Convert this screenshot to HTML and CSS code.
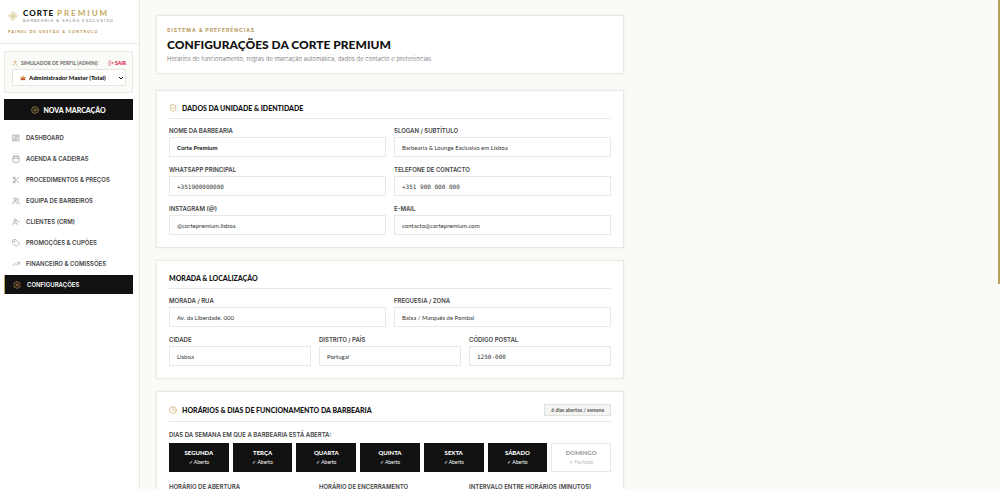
FILE: index.html
```html
<!DOCTYPE html>
<html lang="pt">
  <head>
    <meta charset="UTF-8" />
    <meta name="viewport" content="width=device-width, initial-scale=1.0" />
    <title>Configurações | Corte Premium</title>
    <link rel="stylesheet" href="styles.css">
  </head>
  <body>
    <aside class="sidebar">
      <header class="brand">
        <div class="brand-row">
          <svg class="brand-logo" viewBox="0 0 24 24">
            <path class="soft" d="M12 0l12 12-12 12L0 12z" />
            <path d="M12 4l8 8-8 8-8-8z" />
            <path class="solid" d="M12 9l3 3-3 3-3-3z" />
          </svg>
          <div>
            <div class="brand-name">CORTE <span>PREMIUM</span></div>
            <div class="brand-tagline">BARBEARIA &amp; SALÃO EXCLUSIVO</div>
          </div>
        </div>
        <div class="brand-panel">PAINEL DE GESTÃO &amp; CONTROLO</div>
      </header>

      <div class="profile">
        <div class="profile-top">
          <svg class="icon gold" viewBox="0 0 24 24"><circle cx="12" cy="7" r="4" /><path d="M5 22v-3a4 4 0 0 1 4-4h6a4 4 0 0 1 4 4v3" /></svg>
          <label for="profile">SIMULADOR DE PERFIL (ADMIN):</label>
          <button type="button" class="btn-sair">
            <svg class="icon" viewBox="0 0 24 24"><path d="M9 21H4V3h5M16 17l5-5-5-5M21 12H9" /></svg>
            SAIR
          </button>
        </div>
        <div class="select-wrap">
          <svg class="crown" viewBox="0 0 24 24"><path d="M1 6l6 4 5-8 5 8 6-4-2 15H3z" /><path class="band" d="M4 15h16v5H4z" /></svg>
          <select id="profile">
            <option>Administrador Master (Total)</option>
          </select>
          <svg class="arrow" viewBox="0 0 12 12"><path d="M2 4l4 4 4-4" /></svg>
        </div>
      </div>

      <button type="button" class="btn-nova">
        <svg class="icon" viewBox="0 0 24 24"><circle cx="12" cy="12" r="10" /><path d="M8 12h8M12 8v8" /></svg>
        NOVA MARCAÇÃO
      </button>

      <nav class="menu">
        <a href="#dashboard">
          <svg class="icon" viewBox="0 0 24 24"><rect x="3" y="3" width="7" height="9" /><rect x="14" y="3" width="7" height="5" /><rect x="14" y="12" width="7" height="9" /><rect x="3" y="16" width="7" height="5" /></svg>
          DASHBOARD
        </a>
        <a href="#agenda">
          <svg class="icon" viewBox="0 0 24 24"><rect x="3" y="4" width="18" height="18" rx="2" /><path d="M8 2v4M16 2v4M3 10h18" /></svg>
          AGENDA &amp; CADEIRAS
        </a>
        <a href="#procedimentos">
          <svg class="icon" viewBox="0 0 24 24"><circle cx="6" cy="6" r="3" /><circle cx="6" cy="18" r="3" /><path d="M20 4L8.100 15.900M14.500 14.500L20 20M8.100 8.100L12 12" /></svg>
          PROCEDIMENTOS &amp; PREÇOS
        </a>
        <a href="#equipa">
          <svg class="icon" viewBox="0 0 24 24"><circle cx="9" cy="7" r="4" /><path d="M2 21v-2a4 4 0 0 1 4-4h6a4 4 0 0 1 4 4v2M16 3a4 4 0 0 1 0 8M22 21v-2a4 4 0 0 0-3-4" /></svg>
          EQUIPA DE BARBEIROS
        </a>
        <a href="#clientes">
          <svg class="icon" viewBox="0 0 24 24"><circle cx="9" cy="7" r="4" /><path d="M2 21v-2a4 4 0 0 1 4-4h6a4 4 0 0 1 4 4v2M16 11l2 2 5-5" /></svg>
          CLIENTES (CRM)
        </a>
        <a href="#promocoes">
          <svg class="icon" viewBox="0 0 24 24"><path d="M2 3a1 1 0 0 1 1-1h9l9.500 9.500a2 2 0 0 1 0 3l-7 7a2 2 0 0 1-3 0L2 12z" /><circle cx="7.500" cy="7.500" r="1" /></svg>
          PROMOÇÕES &amp; CUPÕES
        </a>
        <a href="#financeiro">
          <svg class="icon" viewBox="0 0 24 24"><path d="M22 7l-8.500 8.500-5-5L2 17M16 7h6v6" /></svg>
          FINANCEIRO &amp; COMISSÕES
        </a>
        <a href="#configuracoes" class="active">
          <svg class="icon" viewBox="0 0 24 24"><path d="M10 2h4l1 3 2 1 3-1 2 4-2 2v2l2 2-2 4-3-1-2 1-1 3h-4l-1-3-2-1-3 1-2-4 2-2v-2L2 9l2-4 3 1 2-1z" /><circle cx="12" cy="12" r="3" /></svg>
          CONFIGURAÇÕES
        </a>
      </nav>
    </aside>

    <main class="content">
      <section class="card page-head">
        <div class="eyebrow">SISTEMA &amp; PREFERÊNCIAS</div>
        <h1>CONFIGURAÇÕES DA CORTE PREMIUM</h1>
        <p>Horários de funcionamento, regras de marcação automática, dados de contacto e preferências</p>
      </section>

      <form class="settings">
        <section class="card">
          <div class="card-title">
            <svg class="icon gold" viewBox="0 0 24 24"><path d="M12 2l8 3v7c0 5-3 8-8 10-5-2-8-5-8-10V5z" /><path d="M9 12l2 2 4-4" /></svg>
            <h2>DADOS DA UNIDADE &amp; IDENTIDADE</h2>
          </div>
          <div class="grid cols-2">
            <div class="form-group">
              <label for="nome">NOME DA BARBEARIA</label>
              <input type="text" id="nome" class="strong" value="Corte Premium" />
            </div>
            <div class="form-group">
              <label for="slogan">SLOGAN / SUBTÍTULO</label>
              <input type="text" id="slogan" value="Barbearia &amp; Lounge Exclusivo em Lisboa" />
            </div>
            <div class="form-group">
              <label for="whatsapp">WHATSAPP PRINCIPAL</label>
              <input type="text" id="whatsapp" class="mono" value="+351900000000" />
            </div>
            <div class="form-group">
              <label for="telefone">TELEFONE DE CONTACTO</label>
              <input type="text" id="telefone" class="mono" value="+351 900 000 000" />
            </div>
            <div class="form-group">
              <label for="instagram">INSTAGRAM (@)</label>
              <input type="text" id="instagram" value="@cortepremium.lisboa" />
            </div>
            <div class="form-group">
              <label for="email">E-MAIL</label>
              <input type="email" id="email" value="contacto@cortepremium.com" />
            </div>
          </div>
        </section>

        <section class="card">
          <div class="card-title">
            <h2>MORADA &amp; LOCALIZAÇÃO</h2>
          </div>
          <div class="grid cols-2">
            <div class="form-group">
              <label for="rua">MORADA / RUA</label>
              <input type="text" id="rua" value="Av. da Liberdade, 000" />
            </div>
            <div class="form-group">
              <label for="zona">FREGUESIA / ZONA</label>
              <input type="text" id="zona" value="Baixa / Marquês de Pombal" />
            </div>
          </div>
          <div class="grid cols-3">
            <div class="form-group">
              <label for="cidade">CIDADE</label>
              <input type="text" id="cidade" value="Lisboa" />
            </div>
            <div class="form-group">
              <label for="distrito">DISTRITO / PAÍS</label>
              <input type="text" id="distrito" value="Portugal" />
            </div>
            <div class="form-group">
              <label for="postal">CÓDIGO POSTAL</label>
              <input type="text" id="postal" class="mono" value="1250-000" />
            </div>
          </div>
        </section>

        <section class="card">
          <div class="card-title">
            <svg class="icon gold" viewBox="0 0 24 24"><circle cx="12" cy="12" r="10" /><path d="M12 6v6l4 2" /></svg>
            <h2>HORÁRIOS &amp; DIAS DE FUNCIONAMENTO DA BARBEARIA</h2>
            <span class="badge">6 dias abertos / semana</span>
          </div>
          <div class="days-label">DIAS DA SEMANA EM QUE A BARBEARIA ESTÁ ABERTA:</div>
          <div class="days">
            <button type="button">SEGUNDA<small>✓ Aberto</small></button>
            <button type="button">TERÇA<small>✓ Aberto</small></button>
            <button type="button">QUARTA<small>✓ Aberto</small></button>
            <button type="button">QUINTA<small>✓ Aberto</small></button>
            <button type="button">SEXTA<small>✓ Aberto</small></button>
            <button type="button">SÁBADO<small>✓ Aberto</small></button>
            <button type="button" class="closed">DOMINGO<small>✕ Fechado</small></button>
          </div>
          <div class="grid cols-3 hours">
            <div class="form-group">
              <label for="abertura">HORÁRIO DE ABERTURA</label>
              <input type="time" id="abertura" />
            </div>
            <div class="form-group">
              <label for="encerramento">HORÁRIO DE ENCERRAMENTO</label>
              <input type="time" id="encerramento" />
            </div>
            <div class="form-group">
              <label for="intervalo">INTERVALO ENTRE HORÁRIOS (MINUTOS)</label>
              <input type="number" id="intervalo" />
            </div>
          </div>
        </section>
      </form>
    </main>
    <div class="scroll-thumb"></div>
  </body>
</html>
```
FILE: styles.css
```css
* {
  box-sizing: border-box;
}
body {
  margin: 0;
  height: 100vh;
  overflow: hidden;
  display: flex;
  background-color: #fafbf7;
  color: #111;
  font-family: Lato, sans-serif;
  font-size: 6px;
}
button,
input,
select {
  font-family: inherit;
  font-size: inherit;
  margin: 0;
}
button {
  cursor: pointer;
}
.icon {
  width: 8px;
  height: 8px;
  flex: none;
  fill: none;
  stroke: currentColor;
  stroke-width: 2;
  stroke-linecap: round;
  stroke-linejoin: round;
}
.gold {
  color: #c5a55a;
}

/* Sidebar */
.sidebar {
  width: 140px;
  flex: none;
  background-color: white;
  border-right: 1px solid #e6e6e3;
}
.brand {
  height: 44px;
  padding: 9px 8px 0;
  border-bottom: 1px solid #e9e9e6;
}
.brand-row {
  display: flex;
  align-items: center;
  gap: 5px;
}
.brand-logo {
  width: 10px;
  height: 10px;
  fill: none;
  stroke: #d3b878;
  stroke-width: 2;
}
.brand-logo .soft {
  stroke: #eadfc2;
}
.brand-logo .solid {
  fill: #c5a55a;
}
.brand-name {
  font-size: 8px;
  line-height: 9px;
  font-weight: 900;
  letter-spacing: 1px;
  white-space: nowrap;
}
.brand-name span {
  color: #c5a55a;
  font-weight: 700;
  letter-spacing: 2px;
}
.brand-tagline {
  font-family: Inter, sans-serif;
  font-size: 4px;
  line-height: 5px;
  letter-spacing: 1px;
  color: #777;
  white-space: nowrap;
}
.brand-panel {
  margin-top: 6px;
  font-size: 4px;
  line-height: 6px;
  font-weight: 700;
  letter-spacing: 1px;
  color: #b8924a;
}
.profile {
  margin: 7px 6px 6px 4px;
  padding: 6px 6px 6px 7px;
  height: 42px;
  background-color: #fafaf7;
  border: 1px solid #e9e9e4;
}
.profile-top {
  display: flex;
  align-items: center;
  gap: 3px;
  height: 9px;
  font-size: 5px;
  font-weight: 700;
  color: #666;
  white-space: nowrap;
}
.profile-top .icon {
  width: 6px;
  height: 6px;
}
.btn-sair {
  display: flex;
  align-items: center;
  gap: 1px;
  margin-left: auto;
  padding: 0;
  border: none;
  background: none;
  color: #d6204e;
  font-weight: 900;
}
.select-wrap {
  display: flex;
  align-items: center;
  gap: 3px;
  margin-top: 2px;
  height: 17px;
  padding: 0 1px 0 7px;
  background-color: white;
  border: 1px solid #e4e4e0;
}
.select-wrap select {
  flex: 1;
  min-width: 0;
  padding: 0;
  border: none;
  background: none;
  appearance: none;
  color: #111;
  font-size: 6px;
  font-weight: 900;
}
.crown {
  width: 6px;
  height: 6px;
  fill: #d9924a;
}
.crown .band {
  fill: #b5503c;
}
.arrow {
  width: 6px;
  height: 6px;
  fill: none;
  stroke: #111;
  stroke-width: 2;
}
.btn-nova {
  display: flex;
  align-items: center;
  justify-content: center;
  gap: 4px;
  width: 129px;
  height: 21px;
  margin-left: 4px;
  padding: 0;
  border: none;
  background-color: #111;
  color: white;
  font-size: 7px;
  font-weight: 900;
}
.btn-nova .icon {
  color: #c5a55a;
}
.menu {
  display: flex;
  flex-direction: column;
  gap: 2px;
  margin: 8px 6px 0 4px;
}
.menu a {
  display: flex;
  align-items: center;
  gap: 6px;
  height: 19px;
  padding-left: 8px;
  color: #444;
  font-family: Inter, sans-serif;
  font-size: 6px;
  font-weight: 600;
  text-decoration: none;
  white-space: nowrap;
}
.menu .icon {
  color: #999;
}
.menu .active {
  background-color: #111;
  border-left: 1px solid #c5a55a;
  color: white;
}
.menu .active .icon {
  color: #c08a50;
}

/* Content */
.content {
  flex: 1;
  min-width: 0;
  padding: 15px 16px;
}
.card {
  max-width: 468px;
  padding: 12px;
  background-color: white;
  border: 1px solid #e8e8e4;
  box-shadow: 0 0 3px rgba(0, 0, 0, 0.05);
}
.page-head {
  padding: 11px 10px 10px;
  margin-bottom: 16px;
}
.eyebrow {
  font-family: Inter, sans-serif;
  font-size: 5px;
  line-height: 7px;
  font-weight: 700;
  letter-spacing: 1px;
  color: #b8985a;
}
h1 {
  margin: 3px 0 1px;
  font-size: 12px;
  line-height: 16px;
  font-weight: 900;
}
.page-head p {
  margin: 0;
  font-family: Inter, sans-serif;
  font-size: 6px;
  line-height: 9px;
  font-weight: 300;
  color: #666;
}
.settings {
  display: flex;
  flex-direction: column;
  gap: 12px;
}
.card-title {
  display: flex;
  align-items: center;
  gap: 5px;
  padding-bottom: 5px;
  margin-bottom: 7px;
  border-bottom: 1px solid #e8e8e4;
}
h2 {
  margin: 0;
  font-size: 7px;
  line-height: 10px;
  font-weight: 900;
}
.badge {
  margin-left: auto;
  padding: 0 6px;
  border: 1px solid #e0e0dc;
  background-color: #f4f4f2;
  color: #555;
  font-size: 5px;
  line-height: 10px;
  font-weight: 700;
}
.grid {
  display: grid;
  gap: 8px;
}
.cols-2 {
  grid-template-columns: repeat(2, 1fr);
}
.cols-3 {
  grid-template-columns: repeat(3, 1fr);
}
.grid + .grid {
  margin-top: 8px;
}
.form-group {
  display: flex;
  flex-direction: column;
  gap: 2px;
  min-width: 0;
}
.form-group label,
.days-label {
  font-family: Inter, sans-serif;
  font-size: 6px;
  line-height: 9px;
  font-weight: 600;
  color: #444;
  white-space: nowrap;
}
.form-group input {
  width: 100%;
  height: 20px;
  padding: 0 7px;
  border: 1px solid #e8e8e4;
  background-color: white;
  color: #333;
  font-size: 6px;
}
.form-group .strong {
  font-weight: 700;
  color: #111;
}
.form-group .mono {
  font-family: "DejaVu Sans Mono", monospace;
}
.days-label {
  padding-top: 1px;
  margin-bottom: 4px;
}
.days {
  display: grid;
  grid-template-columns: repeat(7, 1fr);
  gap: 4px;
}
.days button {
  display: flex;
  flex-direction: column;
  align-items: center;
  justify-content: center;
  gap: 3px;
  height: 29px;
  padding: 0;
  border: 1px solid #111;
  background-color: #111;
  color: white;
  font-size: 6px;
  line-height: 7px;
  font-weight: 900;
}
.days small {
  font-size: 5px;
  font-weight: 400;
}
.days .closed {
  border-color: #e8e8e4;
  background-color: white;
  color: #999;
}
.days .closed small {
  color: #bbb;
}
.hours {
  margin-top: 10px;
}
.scroll-thumb {
  position: fixed;
  top: 0;
  right: 0;
  width: 2px;
  height: 58vh;
  background-color: #b8a060;
}
```
